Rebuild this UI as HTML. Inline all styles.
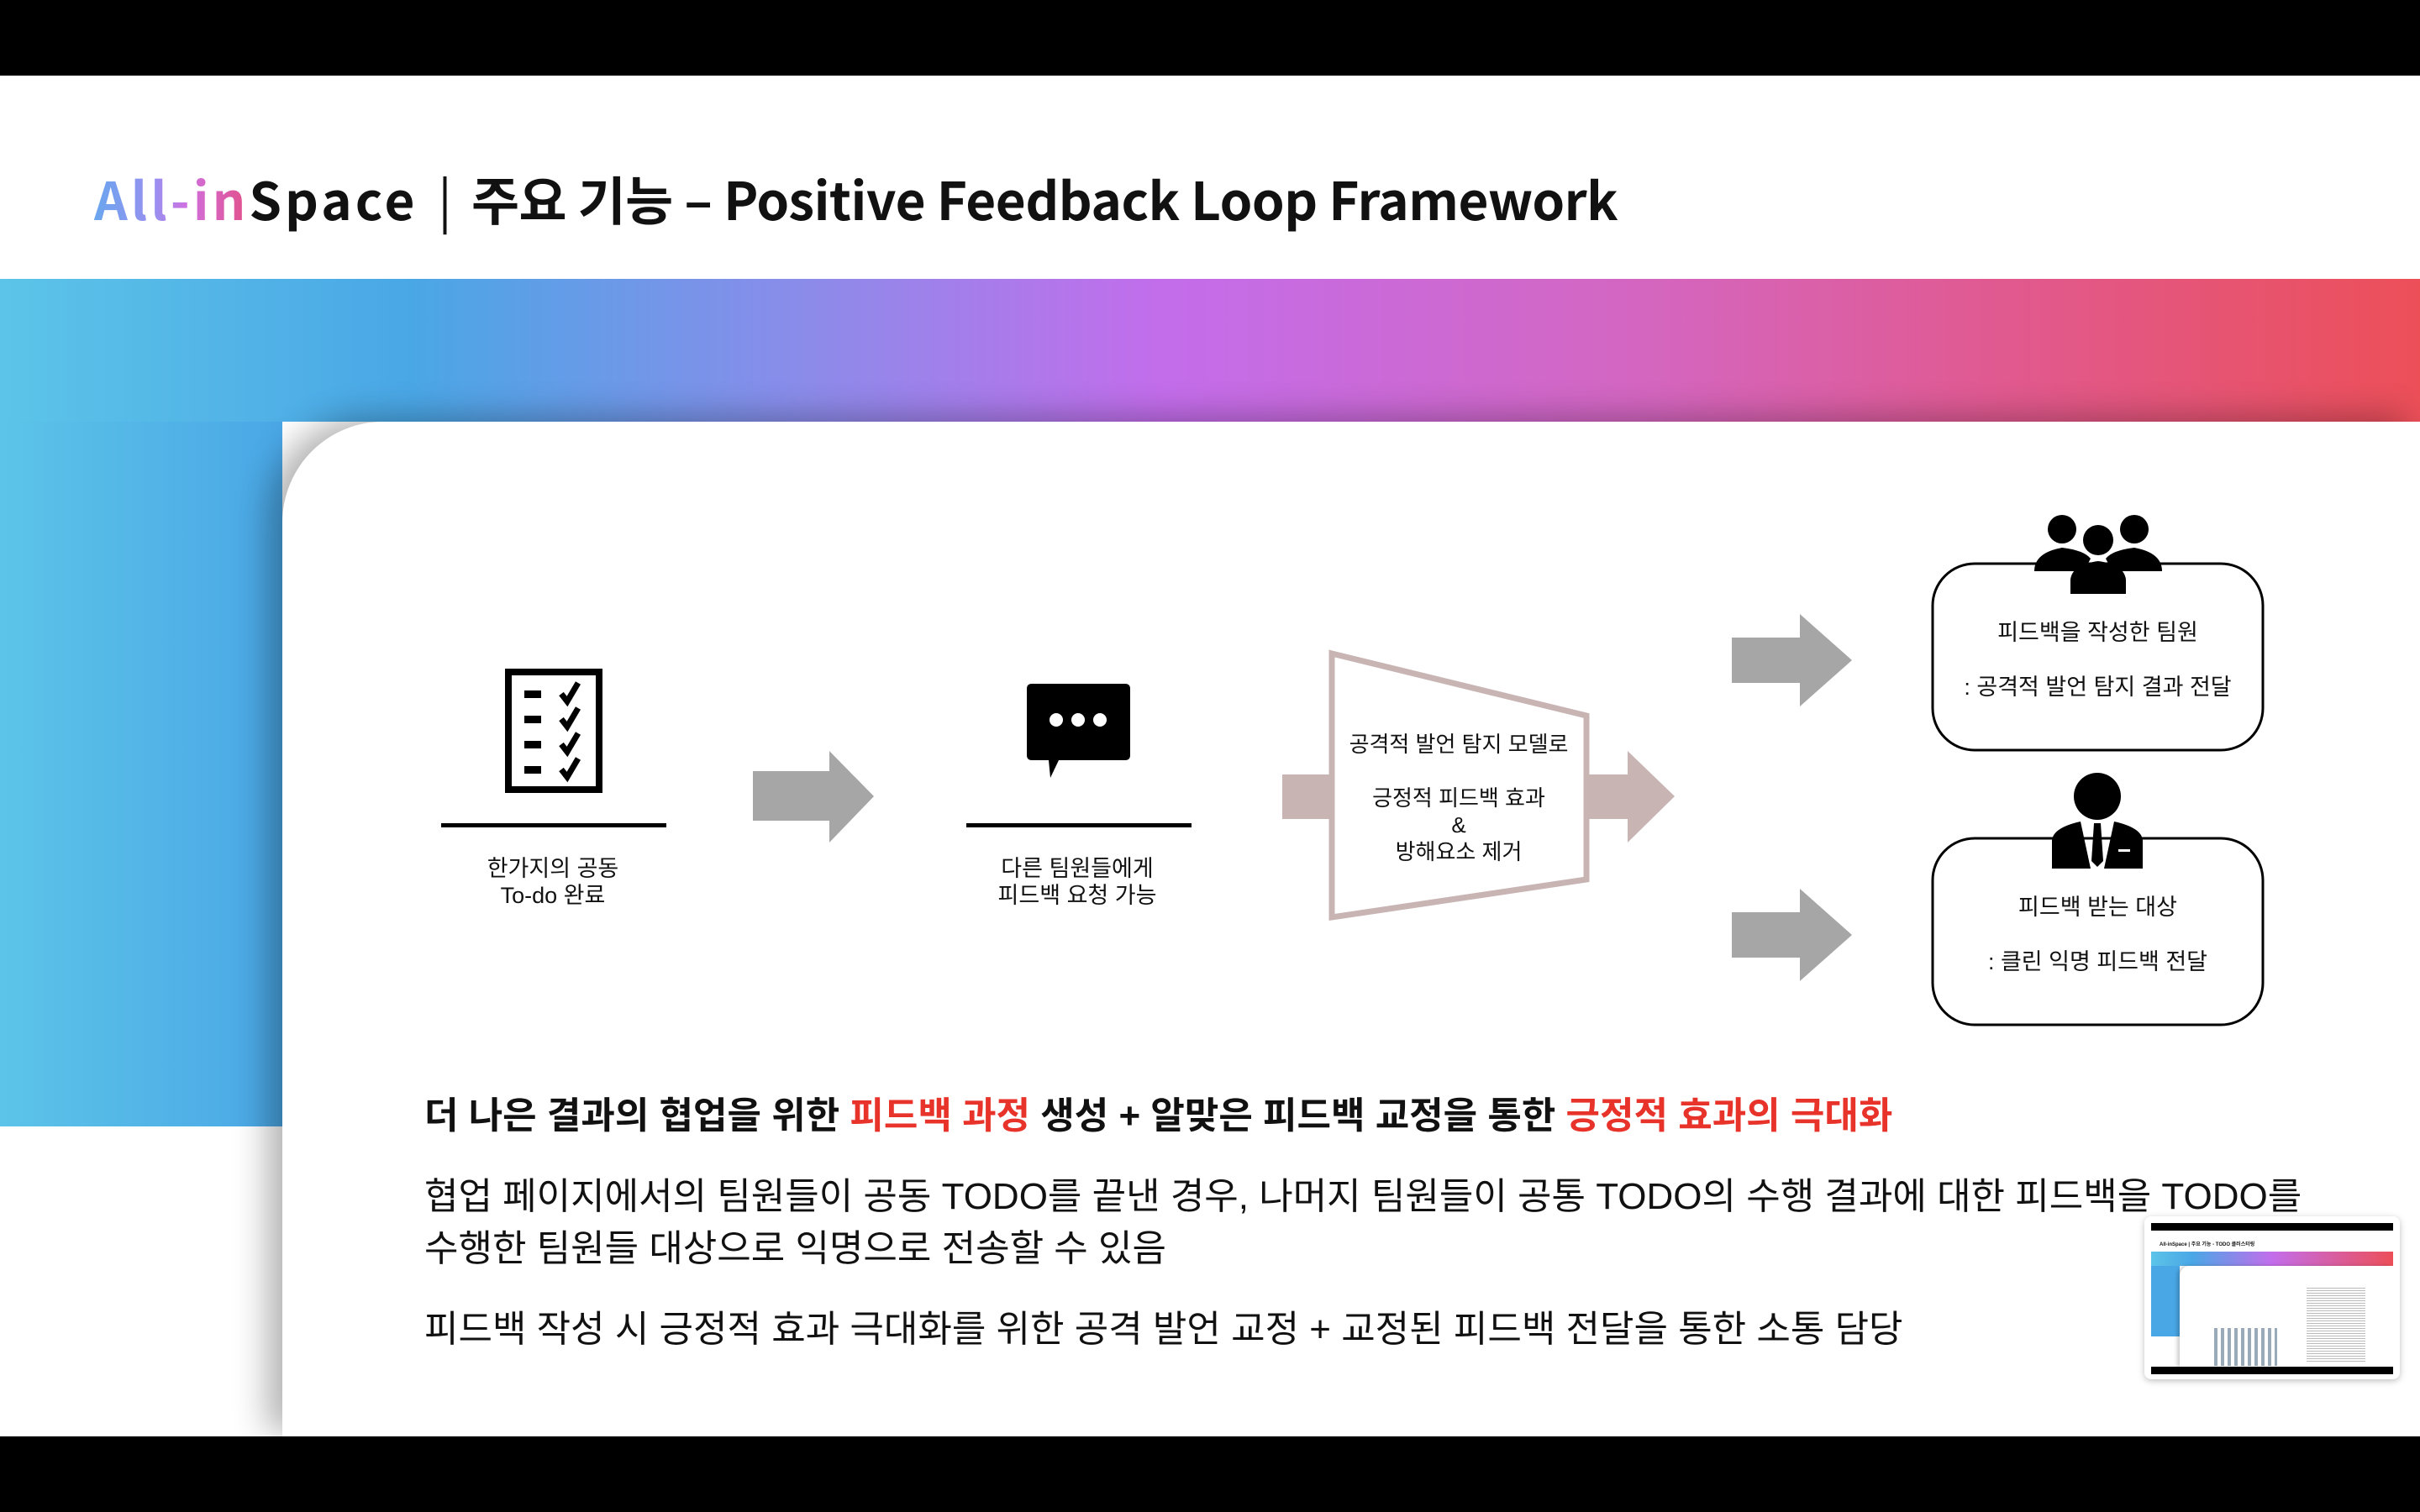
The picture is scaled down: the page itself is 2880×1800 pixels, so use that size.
<!DOCTYPE html>
<html><head><meta charset="utf-8"><style>
*{margin:0;padding:0;box-sizing:border-box}
body{width:2880px;height:1800px;overflow:hidden;background:#fff;position:relative;font-family:"Liberation Sans","Noto Sans CJK KR",sans-serif}
.abs{position:absolute}
.t{white-space:nowrap;color:#111}
.red{color:#e8332b}
</style></head><body>
<div class="abs" style="left:0;top:0;width:2880px;height:90px;background:#000"></div>
<div class="abs" style="left:0;top:1710px;width:2880px;height:90px;background:#000"></div>

<div class="abs t" style="left:112px;top:194px;font-size:62px;font-weight:bold;font-family:'Noto Sans CJK KR','Liberation Sans',sans-serif;letter-spacing:-0.5px;line-height:82px">
<span style="background:linear-gradient(90deg,#6aa6ee,#9a8ff0 40%,#d070e0 60%,#e2508a);-webkit-background-clip:text;color:transparent;letter-spacing:4px">All-in</span><span style="letter-spacing:4px">Space</span> <span style="font-weight:400;margin:0 10px">|</span> 주요 기능 – Positive Feedback Loop Framework</div>

<div class="abs" style="left:0;top:332px;width:2880px;height:170px;background:linear-gradient(90deg,#5cc4e8 0%,#4aa7e6 17%,#8a8cea 33%,#c36deb 48%,#d466c0 68%,#e05a92 82%,#ec4f58 100%)"></div>
<div class="abs" style="left:0;top:502px;width:336px;height:839px;background:linear-gradient(90deg,#5cc4e8,#4aa7e6)"></div>
<div class="abs" style="left:336px;top:502px;width:2544px;height:1208px;background:#fff;border-top-left-radius:120px;box-shadow:-18px -6px 40px rgba(0,0,0,0.3)"></div>

<svg class="abs" style="left:0;top:0" width="2880" height="1800">
<rect x="605" y="800" width="108" height="140" fill="none" stroke="#000" stroke-width="8"/>
<g fill="#000">
<rect x="624" y="822" width="20" height="9"/><rect x="624" y="852" width="20" height="9"/><rect x="624" y="882" width="20" height="9"/><rect x="624" y="912" width="20" height="9"/>
</g>
<g fill="none" stroke="#000" stroke-width="7" stroke-linejoin="miter">
<path d="M668 826 L675 835 L688 813"/><path d="M668 856 L675 865 L688 843"/><path d="M668 886 L675 895 L688 873"/><path d="M668 916 L675 925 L688 903"/>
</g>
<rect x="525" y="980" width="268" height="5" fill="#000"/>
<path d="M896 918 H987 V894 L1040 948 L987 1003 V977 H896Z" fill="#a6a6a6"/>
<path d="M1228 814 H1339 Q1345 814 1345 820 V899 Q1345 905 1339 905 H1260 L1250 926 L1248 905 H1228 Q1222 905 1222 899 V820 Q1222 814 1228 814Z" fill="#000"/>
<circle cx="1257" cy="857" r="8" fill="#fff"/><circle cx="1283" cy="857" r="8" fill="#fff"/><circle cx="1309" cy="857" r="8" fill="#fff"/>
<rect x="1150" y="980" width="268" height="5" fill="#000"/>
<rect x="1526" y="922" width="60" height="53" fill="#c8b4b3"/>
<path d="M1890 922 H1937 V894 L1993 948 L1937 1003 V975 H1890Z" fill="#c8b4b3"/>
<path d="M1585 778 L1888 852 L1888 1047 L1585 1092Z" fill="#fff" stroke="#c8b4b3" stroke-width="7"/>
<path d="M2061 759 H2142 V731 L2204 786 L2142 841 V813 H2061Z" fill="#a6a6a6"/>
<path d="M2061 1086 H2142 V1058 L2204 1113 L2142 1168 V1140 H2061Z" fill="#a6a6a6"/>
<rect x="2300" y="671" width="393" height="222" rx="50" fill="#fff" stroke="#000" stroke-width="3"/>
<rect x="2300" y="998" width="393" height="222" rx="50" fill="#fff" stroke="#000" stroke-width="3"/>
<g fill="#000">
<circle cx="2454" cy="630" r="17"/><circle cx="2540" cy="630" r="17"/>
<path d="M2421 680 Q2421 658 2454 652 Q2480 655 2488 665 L2480 680Z"/>
<path d="M2573 680 Q2573 658 2540 652 Q2514 655 2506 665 L2514 680Z"/>
<circle cx="2497" cy="643" r="18"/>
<path d="M2464 707 V690 Q2466 672 2497 668 Q2528 672 2530 690 V707Z"/>
</g>
<g fill="#000">
<circle cx="2496" cy="948" r="28"/>
<path d="M2442 1034 V1000 Q2444 985 2476 978 L2488 1034Z"/>
<path d="M2550 1034 V1000 Q2548 985 2516 978 L2504 1034Z"/>
<path d="M2492 980 H2500 L2503 1025 L2496 1032 L2489 1025Z"/>
</g>
<rect x="2521" y="1011" width="14" height="3" fill="#fff"/>
</svg>

<div class="abs t" style="left:508px;top:1018px;width:300px;text-align:center;font-size:27px;line-height:32px">한가지의 공동<br>To-do 완료</div>
<div class="abs t" style="left:1132px;top:1018px;width:300px;text-align:center;font-size:27px;line-height:32px">다른 팀원들에게<br>피드백 요청 가능</div>
<div class="abs t" style="left:1586px;top:869px;width:300px;text-align:center;font-size:26px;line-height:34px">공격적 발언 탐지 모델로</div>
<div class="abs t" style="left:1586px;top:934px;width:300px;text-align:center;font-size:26px;line-height:32px">긍정적 피드백 효과<br>&amp;<br>방해요소 제거</div>
<div class="abs t" style="left:2300px;top:735px;width:393px;text-align:center;font-size:27px;line-height:36px">피드백을 작성한 팀원</div>
<div class="abs t" style="left:2300px;top:800px;width:393px;text-align:center;font-size:27px;line-height:36px">: 공격적 발언 탐지 결과 전달</div>
<div class="abs t" style="left:2300px;top:1062px;width:393px;text-align:center;font-size:27px;line-height:36px">피드백 받는 대상</div>
<div class="abs t" style="left:2300px;top:1127px;width:393px;text-align:center;font-size:27px;line-height:36px">:  클린 익명 피드백 전달</div>

<div class="abs t" style="left:505px;top:1301px;font-size:44px;font-weight:bold;line-height:56px">더 나은 결과의 협업을 위한 <span class="red">피드백 과정</span> 생성 + 알맞은 피드백 교정을 통한 <span class="red">긍정적 효과의 극대화</span></div>
<div class="abs t" style="left:505px;top:1394px;font-size:44px;line-height:62px">협업 페이지에서의 팀원들이 공동 TODO를 끝낸 경우, 나머지 팀원들이 공통 TODO의 수행 결과에 대한 피드백을  TODO를<br>수행한 팀원들 대상으로 익명으로 전송할 수 있음</div>
<div class="abs t" style="left:505px;top:1555px;font-size:44px;line-height:56px">피드백 작성 시 긍정적 효과 극대화를 위한 공격 발언 교정 + 교정된 피드백 전달을 통한 소통 담당</div>

<div class="abs" style="left:2552px;top:1448px;width:304px;height:194px;background:#fff;border-radius:8px;box-shadow:0 2px 8px rgba(0,0,0,0.25)">
 <div class="abs" style="left:8px;top:8px;width:288px;height:180px;background:#fff;overflow:hidden">
  <div class="abs" style="left:0;top:0;width:288px;height:9px;background:#000"></div>
  <div class="abs t" style="left:10px;top:20px;font-size:6px;font-weight:bold">All-inSpace | 주요 기능 - TODO 클러스터링</div>
  <div class="abs" style="left:0;top:34px;width:288px;height:17px;background:linear-gradient(90deg,#5cc4e8,#4aa7e6 17%,#c36deb 50%,#ec4f58)"></div>
  <div class="abs" style="left:0;top:51px;width:34px;height:84px;background:#4aa7e6"></div>
  <div class="abs" style="left:34px;top:51px;width:254px;height:120px;background:#fff;border-top-left-radius:12px;box-shadow:-3px 0 5px rgba(0,0,0,0.2)"></div>
  <div class="abs" style="left:75px;top:125px;width:75px;height:45px;background:repeating-linear-gradient(90deg,#9ab 0 4px,#fff 4px 8px)"></div>
  <div class="abs" style="left:185px;top:75px;width:70px;height:90px;background:repeating-linear-gradient(0deg,#bbb 0 1px,#fff 1px 3px)"></div>
  <div class="abs" style="left:0;top:171px;width:288px;height:9px;background:#000"></div>
 </div>
</div>
</body></html>
